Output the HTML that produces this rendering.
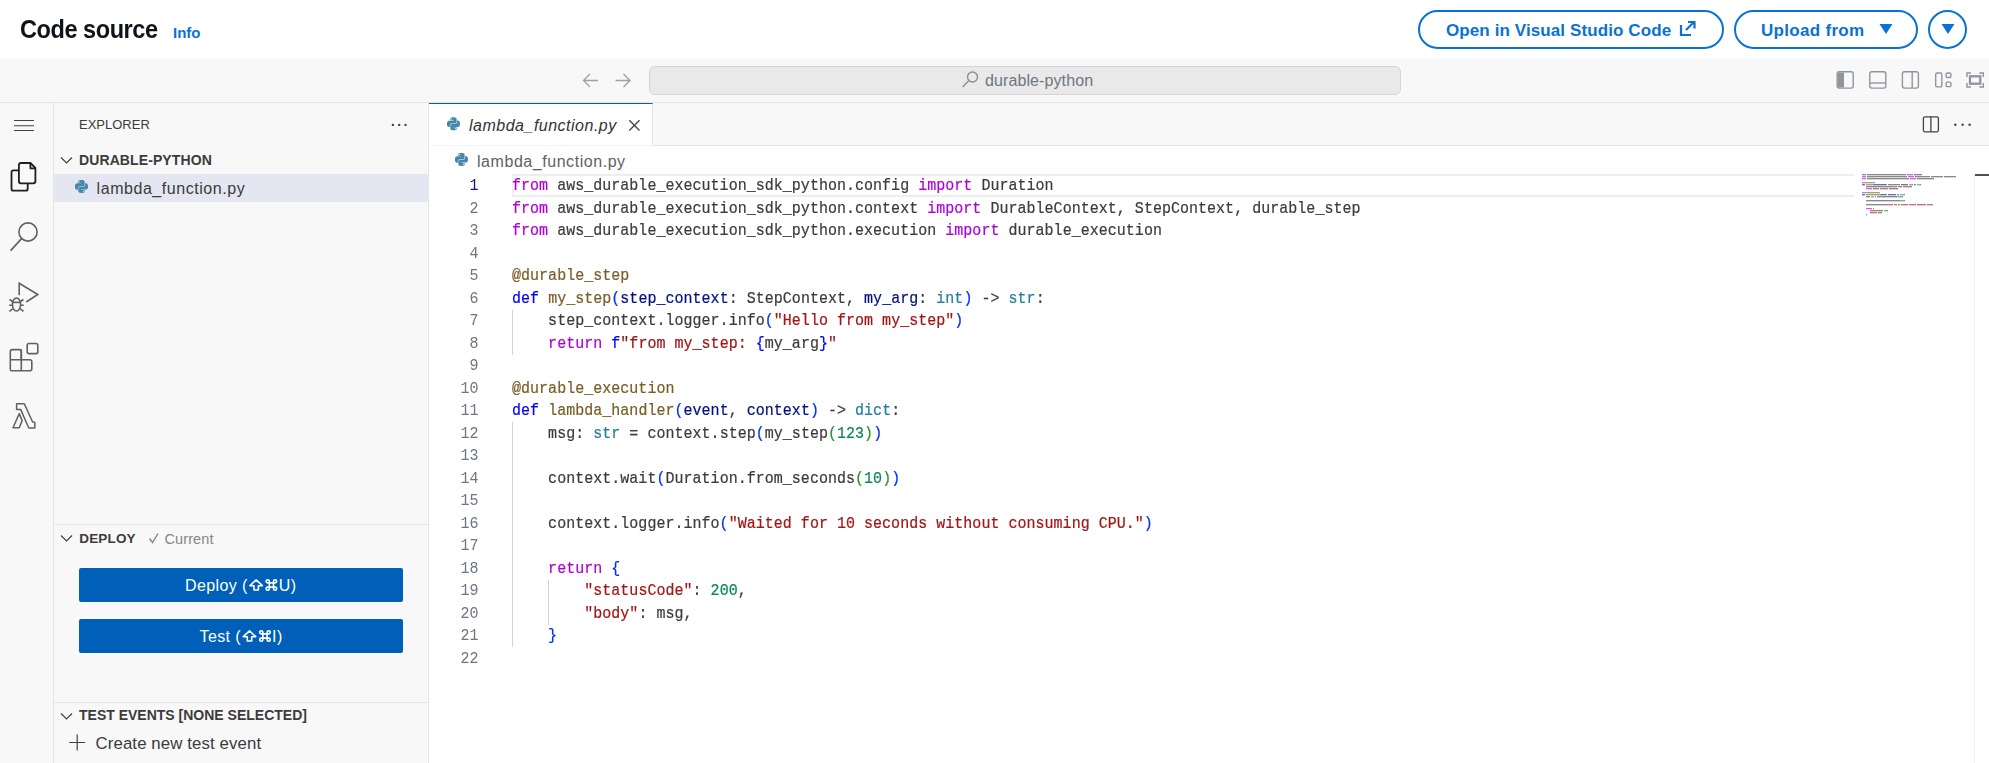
<!DOCTYPE html>
<html><head><meta charset="utf-8">
<style>
*{margin:0;padding:0;box-sizing:border-box}
html,body{width:1989px;height:763px;overflow:hidden;background:#fff;font-family:"Liberation Sans",sans-serif}
.a{position:absolute;white-space:pre}
.bg{position:absolute}
.cl{position:absolute;left:512px;height:22.5px;line-height:22.5px;font-family:"Liberation Mono",monospace;font-size:15px;white-space:pre;color:#3b3b3b;letter-spacing:0.025px;-webkit-text-stroke:0.2px currentColor;transform:scaleY(1.1);transform-origin:0 15.25px}
.ln{position:absolute;left:430px;width:48.5px;text-align:right;height:22.5px;line-height:22.5px;font-family:"Liberation Mono",monospace;font-size:15px;white-space:pre;transform:scaleY(1.1);transform-origin:0 15.25px}
#mm i{position:absolute;height:2px;opacity:.6;-webkit-mask-image:linear-gradient(180deg,#000 0 1px,rgba(0,0,0,.35) 1px 2px)}
.btn{position:absolute;border:2px solid #0972d3;border-radius:20px;background:#fff}
.dbtn{position:absolute;left:79px;width:324px;height:34px;background:#005fb8;border-radius:2px}
</style></head><body>
<!-- header -->
<div class="a" style="left:19.5px;top:14.3px;font-size:26px;line-height:30px;font-weight:bold;color:#0f141a;letter-spacing:-0.5px;transform:scaleX(0.905);transform-origin:0 0">Code source</div>
<div class="a" style="left:173px;top:24px;font-size:15px;line-height:17px;font-weight:bold;color:#0972d3">Info</div>

<div class="btn" style="left:1418px;top:10px;width:306px;height:39px"></div>
<div class="a" style="left:1446px;top:21px;font-size:17px;line-height:19px;font-weight:bold;color:#0972d3;letter-spacing:0.1px">Open in Visual Studio Code</div>
<div class="btn" style="left:1734px;top:10px;width:184px;height:39px"></div>
<div class="a" style="left:1761px;top:21px;font-size:17px;line-height:19px;font-weight:bold;color:#0972d3;letter-spacing:0.3px">Upload from</div>
<div class="btn" style="left:1928px;top:10px;width:39px;height:39px;border-radius:50%"></div>

<!-- toolbar -->
<div class="bg" style="left:0;top:59px;width:1989px;height:44px;background:#f8f8f8;border-bottom:1px solid #e5e5e5"></div>
<div class="bg" style="left:649px;top:66px;width:752px;height:29px;background:#e9e9e9;border:1px solid #d4d4d4;border-radius:6px"></div>
<div class="a" style="left:985px;top:72px;font-size:16px;line-height:18px;color:#6e7681;letter-spacing:0.1px">durable-python</div>

<!-- activity bar -->
<div class="bg" style="left:0;top:103px;width:54px;height:660px;background:#f8f8f8;border-right:1px solid #e5e5e5"></div>
<!-- sidebar -->
<div class="bg" style="left:54px;top:103px;width:375px;height:660px;background:#f8f8f8;border-right:1px solid #e5e5e5"></div>
<div class="a" style="left:79px;top:117px;font-size:13px;line-height:15px;color:#3b3b3b">EXPLORER</div>
<div class="a" style="left:79px;top:152px;font-size:14px;line-height:16px;font-weight:bold;color:#3b3b3b;letter-spacing:0.1px">DURABLE-PYTHON</div>
<div class="bg" style="left:54px;top:174px;width:374px;height:28px;background:#e4e6f1"></div>
<div class="a" style="left:96.6px;top:179.5px;font-size:16px;line-height:18px;color:#3b3b3b;letter-spacing:0.55px">lambda_function.py</div>

<div class="bg" style="left:54px;top:524px;width:374px;height:1px;background:#e5e5e5"></div>
<div class="a" style="left:79.3px;top:530.8px;font-size:13.5px;line-height:16px;font-weight:bold;color:#3b3b3b;letter-spacing:0.15px">DEPLOY</div>
<div class="a" style="left:164.5px;top:530.6px;font-size:14.5px;line-height:16px;color:#868686;letter-spacing:0.1px">Current</div>
<div class="dbtn" style="top:568px"></div>
<div class="dbtn" style="top:619px"></div>
<div class="a" style="left:185px;top:576.8px;font-size:16px;line-height:18px;color:#fff;letter-spacing:0.4px">Deploy (</div>
<div class="a" style="left:278.8px;top:576.8px;font-size:16px;line-height:18px;color:#fff;letter-spacing:0.4px">U)</div>
<div class="a" style="left:199.5px;top:627.8px;font-size:16px;line-height:18px;color:#fff;letter-spacing:0.4px">Test (</div>
<div class="a" style="left:272px;top:627.8px;font-size:16px;line-height:18px;color:#fff;letter-spacing:0.6px">I)</div>

<div class="bg" style="left:54px;top:702px;width:374px;height:1px;background:#e5e5e5"></div>
<div class="a" style="left:79px;top:707px;font-size:14px;line-height:16px;font-weight:bold;color:#3b3b3b">TEST EVENTS [NONE SELECTED]</div>
<div class="a" style="left:95.5px;top:735px;font-size:16.8px;line-height:18px;color:#3b3b3b;letter-spacing:0.12px">Create new test event</div>

<!-- editor tabs -->
<div class="bg" style="left:429px;top:103px;width:1560px;height:43px;background:#f8f8f8;border-bottom:1px solid #e5e5e5"></div>
<div class="bg" style="left:429px;top:103px;width:224px;height:43px;background:#fff;border-top:1.5px solid #005fb8;border-right:1px solid #e5e5e5;border-bottom:1px solid #f4f4f4"></div>
<div class="a" style="left:469px;top:117px;font-size:16px;line-height:18px;font-style:italic;color:#333;letter-spacing:0.5px">lambda_function.py</div>
<div class="a" style="left:477px;top:153px;font-size:16px;line-height:18px;color:#616161;letter-spacing:0.55px">lambda_function.py</div>

<!-- current line highlight -->
<div class="bg" style="left:512px;top:174px;width:1342px;height:23px;border:2px solid #eeeeee;border-right:none"></div>
<!-- indent guides -->
<div class="bg" style="left:512px;top:309.75px;width:1px;height:45px;background:#d3d3d3"></div>
<div class="bg" style="left:512px;top:422.25px;width:1px;height:225px;background:#d3d3d3"></div>
<div class="bg" style="left:548px;top:579.75px;width:1px;height:45px;background:#d3d3d3"></div>

<div class="cl" style="top:176.00px"><span style="color:#af00db">from</span><span style="color:#3b3b3b"> aws_durable_execution_sdk_python.config </span><span style="color:#af00db">import</span><span style="color:#3b3b3b"> Duration</span></div>
<div class="ln" style="top:176.00px;color:#171184">1</div>
<div class="cl" style="top:198.50px"><span style="color:#af00db">from</span><span style="color:#3b3b3b"> aws_durable_execution_sdk_python.context </span><span style="color:#af00db">import</span><span style="color:#3b3b3b"> DurableContext, StepContext, durable_step</span></div>
<div class="ln" style="top:198.50px;color:#6e7681">2</div>
<div class="cl" style="top:221.00px"><span style="color:#af00db">from</span><span style="color:#3b3b3b"> aws_durable_execution_sdk_python.execution </span><span style="color:#af00db">import</span><span style="color:#3b3b3b"> durable_execution</span></div>
<div class="ln" style="top:221.00px;color:#6e7681">3</div>
<div class="cl" style="top:243.50px"></div>
<div class="ln" style="top:243.50px;color:#6e7681">4</div>
<div class="cl" style="top:266.00px"><span style="color:#795e26">@durable_step</span></div>
<div class="ln" style="top:266.00px;color:#6e7681">5</div>
<div class="cl" style="top:288.50px"><span style="color:#0000ff">def</span><span style="color:#3b3b3b"> </span><span style="color:#795e26">my_step</span><span style="color:#0431fa">(</span><span style="color:#001080">step_context</span><span style="color:#3b3b3b">: StepContext, </span><span style="color:#001080">my_arg</span><span style="color:#3b3b3b">: </span><span style="color:#267f99">int</span><span style="color:#0431fa">)</span><span style="color:#3b3b3b"> -&gt; </span><span style="color:#267f99">str</span><span style="color:#3b3b3b">:</span></div>
<div class="ln" style="top:288.50px;color:#6e7681">6</div>
<div class="cl" style="top:311.00px"><span style="color:#3b3b3b">    step_context.logger.info</span><span style="color:#0431fa">(</span><span style="color:#a31515">&quot;Hello from my_step&quot;</span><span style="color:#0431fa">)</span></div>
<div class="ln" style="top:311.00px;color:#6e7681">7</div>
<div class="cl" style="top:333.50px"><span style="color:#3b3b3b">    </span><span style="color:#af00db">return</span><span style="color:#3b3b3b"> </span><span style="color:#0000ff">f</span><span style="color:#a31515">&quot;from my_step: </span><span style="color:#0000ff">{</span><span style="color:#3b3b3b">my_arg</span><span style="color:#0000ff">}</span><span style="color:#a31515">&quot;</span></div>
<div class="ln" style="top:333.50px;color:#6e7681">8</div>
<div class="cl" style="top:356.00px"></div>
<div class="ln" style="top:356.00px;color:#6e7681">9</div>
<div class="cl" style="top:378.50px"><span style="color:#795e26">@durable_execution</span></div>
<div class="ln" style="top:378.50px;color:#6e7681">10</div>
<div class="cl" style="top:401.00px"><span style="color:#0000ff">def</span><span style="color:#3b3b3b"> </span><span style="color:#795e26">lambda_handler</span><span style="color:#0431fa">(</span><span style="color:#001080">event</span><span style="color:#3b3b3b">, </span><span style="color:#001080">context</span><span style="color:#0431fa">)</span><span style="color:#3b3b3b"> -&gt; </span><span style="color:#267f99">dict</span><span style="color:#3b3b3b">:</span></div>
<div class="ln" style="top:401.00px;color:#6e7681">11</div>
<div class="cl" style="top:423.50px"><span style="color:#3b3b3b">    msg: </span><span style="color:#267f99">str</span><span style="color:#3b3b3b"> = context.step</span><span style="color:#0431fa">(</span><span style="color:#3b3b3b">my_step</span><span style="color:#319331">(</span><span style="color:#098658">123</span><span style="color:#319331">)</span><span style="color:#0431fa">)</span></div>
<div class="ln" style="top:423.50px;color:#6e7681">12</div>
<div class="cl" style="top:446.00px"></div>
<div class="ln" style="top:446.00px;color:#6e7681">13</div>
<div class="cl" style="top:468.50px"><span style="color:#3b3b3b">    context.wait</span><span style="color:#0431fa">(</span><span style="color:#3b3b3b">Duration.from_seconds</span><span style="color:#319331">(</span><span style="color:#098658">10</span><span style="color:#319331">)</span><span style="color:#0431fa">)</span></div>
<div class="ln" style="top:468.50px;color:#6e7681">14</div>
<div class="cl" style="top:491.00px"></div>
<div class="ln" style="top:491.00px;color:#6e7681">15</div>
<div class="cl" style="top:513.50px"><span style="color:#3b3b3b">    context.logger.info</span><span style="color:#0431fa">(</span><span style="color:#a31515">&quot;Waited for 10 seconds without consuming CPU.&quot;</span><span style="color:#0431fa">)</span></div>
<div class="ln" style="top:513.50px;color:#6e7681">16</div>
<div class="cl" style="top:536.00px"></div>
<div class="ln" style="top:536.00px;color:#6e7681">17</div>
<div class="cl" style="top:558.50px"><span style="color:#3b3b3b">    </span><span style="color:#af00db">return</span><span style="color:#3b3b3b"> </span><span style="color:#0431fa">{</span></div>
<div class="ln" style="top:558.50px;color:#6e7681">18</div>
<div class="cl" style="top:581.00px"><span style="color:#3b3b3b">        </span><span style="color:#a31515">&quot;statusCode&quot;</span><span style="color:#3b3b3b">: </span><span style="color:#098658">200</span><span style="color:#3b3b3b">,</span></div>
<div class="ln" style="top:581.00px;color:#6e7681">19</div>
<div class="cl" style="top:603.50px"><span style="color:#3b3b3b">        </span><span style="color:#a31515">&quot;body&quot;</span><span style="color:#3b3b3b">: msg,</span></div>
<div class="ln" style="top:603.50px;color:#6e7681">20</div>
<div class="cl" style="top:626.00px"><span style="color:#3b3b3b">    </span><span style="color:#0431fa">}</span></div>
<div class="ln" style="top:626.00px;color:#6e7681">21</div>
<div class="cl" style="top:648.50px"></div>
<div class="ln" style="top:648.50px;color:#6e7681">22</div>

<div id="mm"><i style="left:1862px;top:174.0px;width:4px;background:#af00db"></i><i style="left:1867px;top:174.0px;width:39px;background:#3b3b3b"></i><i style="left:1907px;top:174.0px;width:6px;background:#af00db"></i><i style="left:1914px;top:174.0px;width:8px;background:#3b3b3b"></i><i style="left:1862px;top:176.0px;width:4px;background:#af00db"></i><i style="left:1867px;top:176.0px;width:40px;background:#3b3b3b"></i><i style="left:1908px;top:176.0px;width:6px;background:#af00db"></i><i style="left:1915px;top:176.0px;width:15px;background:#3b3b3b"></i><i style="left:1931px;top:176.0px;width:12px;background:#3b3b3b"></i><i style="left:1944px;top:176.0px;width:12px;background:#3b3b3b"></i><i style="left:1862px;top:178.0px;width:4px;background:#af00db"></i><i style="left:1867px;top:178.0px;width:42px;background:#3b3b3b"></i><i style="left:1910px;top:178.0px;width:6px;background:#af00db"></i><i style="left:1917px;top:178.0px;width:17px;background:#3b3b3b"></i><i style="left:1862px;top:182.0px;width:13px;background:#795e26"></i><i style="left:1862px;top:184.0px;width:3px;background:#0000ff"></i><i style="left:1866px;top:184.0px;width:7px;background:#795e26"></i><i style="left:1873px;top:184.0px;width:1px;background:#0431fa"></i><i style="left:1874px;top:184.0px;width:12px;background:#001080"></i><i style="left:1886px;top:184.0px;width:1px;background:#3b3b3b"></i><i style="left:1888px;top:184.0px;width:12px;background:#3b3b3b"></i><i style="left:1901px;top:184.0px;width:6px;background:#001080"></i><i style="left:1907px;top:184.0px;width:1px;background:#3b3b3b"></i><i style="left:1909px;top:184.0px;width:3px;background:#267f99"></i><i style="left:1912px;top:184.0px;width:1px;background:#0431fa"></i><i style="left:1914px;top:184.0px;width:2px;background:#3b3b3b"></i><i style="left:1917px;top:184.0px;width:3px;background:#267f99"></i><i style="left:1920px;top:184.0px;width:1px;background:#3b3b3b"></i><i style="left:1866px;top:186.0px;width:24px;background:#3b3b3b"></i><i style="left:1890px;top:186.0px;width:1px;background:#0431fa"></i><i style="left:1891px;top:186.0px;width:6px;background:#a31515"></i><i style="left:1898px;top:186.0px;width:4px;background:#a31515"></i><i style="left:1903px;top:186.0px;width:8px;background:#a31515"></i><i style="left:1911px;top:186.0px;width:1px;background:#0431fa"></i><i style="left:1866px;top:188.0px;width:6px;background:#af00db"></i><i style="left:1873px;top:188.0px;width:1px;background:#0000ff"></i><i style="left:1874px;top:188.0px;width:5px;background:#a31515"></i><i style="left:1880px;top:188.0px;width:8px;background:#a31515"></i><i style="left:1889px;top:188.0px;width:1px;background:#0000ff"></i><i style="left:1890px;top:188.0px;width:6px;background:#3b3b3b"></i><i style="left:1896px;top:188.0px;width:1px;background:#0000ff"></i><i style="left:1897px;top:188.0px;width:1px;background:#a31515"></i><i style="left:1862px;top:192.0px;width:18px;background:#795e26"></i><i style="left:1862px;top:194.0px;width:3px;background:#0000ff"></i><i style="left:1866px;top:194.0px;width:14px;background:#795e26"></i><i style="left:1880px;top:194.0px;width:1px;background:#0431fa"></i><i style="left:1881px;top:194.0px;width:5px;background:#001080"></i><i style="left:1886px;top:194.0px;width:1px;background:#3b3b3b"></i><i style="left:1888px;top:194.0px;width:7px;background:#001080"></i><i style="left:1895px;top:194.0px;width:1px;background:#0431fa"></i><i style="left:1897px;top:194.0px;width:2px;background:#3b3b3b"></i><i style="left:1900px;top:194.0px;width:4px;background:#267f99"></i><i style="left:1904px;top:194.0px;width:1px;background:#3b3b3b"></i><i style="left:1866px;top:196.0px;width:4px;background:#3b3b3b"></i><i style="left:1871px;top:196.0px;width:3px;background:#267f99"></i><i style="left:1875px;top:196.0px;width:1px;background:#3b3b3b"></i><i style="left:1877px;top:196.0px;width:12px;background:#3b3b3b"></i><i style="left:1889px;top:196.0px;width:1px;background:#0431fa"></i><i style="left:1890px;top:196.0px;width:7px;background:#3b3b3b"></i><i style="left:1897px;top:196.0px;width:1px;background:#319331"></i><i style="left:1898px;top:196.0px;width:3px;background:#098658"></i><i style="left:1901px;top:196.0px;width:1px;background:#319331"></i><i style="left:1902px;top:196.0px;width:1px;background:#0431fa"></i><i style="left:1866px;top:200.0px;width:12px;background:#3b3b3b"></i><i style="left:1878px;top:200.0px;width:1px;background:#0431fa"></i><i style="left:1879px;top:200.0px;width:21px;background:#3b3b3b"></i><i style="left:1900px;top:200.0px;width:1px;background:#319331"></i><i style="left:1901px;top:200.0px;width:2px;background:#098658"></i><i style="left:1903px;top:200.0px;width:1px;background:#319331"></i><i style="left:1904px;top:200.0px;width:1px;background:#0431fa"></i><i style="left:1866px;top:204.0px;width:19px;background:#3b3b3b"></i><i style="left:1885px;top:204.0px;width:1px;background:#0431fa"></i><i style="left:1886px;top:204.0px;width:7px;background:#a31515"></i><i style="left:1894px;top:204.0px;width:3px;background:#a31515"></i><i style="left:1898px;top:204.0px;width:2px;background:#a31515"></i><i style="left:1901px;top:204.0px;width:7px;background:#a31515"></i><i style="left:1909px;top:204.0px;width:7px;background:#a31515"></i><i style="left:1917px;top:204.0px;width:9px;background:#a31515"></i><i style="left:1927px;top:204.0px;width:5px;background:#a31515"></i><i style="left:1932px;top:204.0px;width:1px;background:#0431fa"></i><i style="left:1866px;top:208.0px;width:6px;background:#af00db"></i><i style="left:1873px;top:208.0px;width:1px;background:#0431fa"></i><i style="left:1870px;top:210.0px;width:12px;background:#a31515"></i><i style="left:1882px;top:210.0px;width:1px;background:#3b3b3b"></i><i style="left:1884px;top:210.0px;width:3px;background:#098658"></i><i style="left:1887px;top:210.0px;width:1px;background:#3b3b3b"></i><i style="left:1870px;top:212.0px;width:6px;background:#a31515"></i><i style="left:1876px;top:212.0px;width:1px;background:#3b3b3b"></i><i style="left:1878px;top:212.0px;width:4px;background:#3b3b3b"></i><i style="left:1866px;top:214.0px;width:1px;background:#0431fa"></i></div>
<!-- scrollbar -->
<div class="bg" style="left:1974px;top:174px;width:1px;height:589px;background:#f0f0f0"></div>
<div class="bg" style="left:1975px;top:174px;width:14px;height:2px;background:#505050"></div>

<svg class="bg" style="left:0;top:0" width="1989" height="763" viewBox="0 0 1989 763" fill="none">
 <!-- header triangles / external icon -->
 <g fill="#0972d3">
  <path d="M1879.5,24 L1892.5,24 L1886,34 Z"/>
  <path d="M1941.5,24 L1954.5,24 L1948,34 Z"/>
 </g>
 <g stroke="#0972d3" stroke-width="2.2" fill="none">
  <path d="M1681,25 V35 H1691"/>
  <path d="M1686,30 L1694,22 M1688,22 H1694.5 V28.5"/>
 </g>
 <!-- nav arrows -->
 <g stroke="#a0a0a0" stroke-width="1.3" fill="none">
  <path d="M598,80.5 H583.5 M590,74 L583.5,80.5 L590,87"/>
  <path d="M615.5,80.5 H630 M623.5,74 L630,80.5 L623.5,87"/>
 </g>
 <!-- search icon -->
 <g stroke="#8a8f96" stroke-width="1.4" fill="none">
  <circle cx="972.5" cy="77" r="5"/>
  <path d="M969,80.5 L962.5,87"/>
 </g>
 <!-- layout icons -->
 <g stroke="#8e959e" stroke-width="1.4" fill="none">
  <rect x="1837.2" y="71.8" width="16" height="16.3" rx="2"/>
  <rect x="1869.8" y="71.8" width="16" height="16.3" rx="2"/>
  <path d="M1869.8,83 H1885.8"/>
  <rect x="1902.4" y="71.8" width="16" height="16.3" rx="2"/>
  <path d="M1912.2,71.8 V88.1"/>
  <rect x="1935.7" y="73" width="6.1" height="13.9" rx="1.5"/>
  <rect x="1946.1" y="73" width="4.8" height="4.5" rx="1.2"/>
  <rect x="1946.1" y="82.1" width="4.8" height="4.5" rx="1.2"/>
  <path d="M1967,77 V73 H1971 M1979.3,73 H1983.3 V77 M1983.3,83 V87 H1979.3 M1971,87 H1967 V83"/>
  <rect x="1970" y="76.3" width="10.3" height="7.4" stroke-width="2.3"/>
 </g>
 <path d="M1838,72.5 H1844 V87.5 H1838 Z" fill="#8e959e"/>

 <!-- activity bar -->
 <g stroke="#424242" stroke-width="1.2">
  <path d="M14,120.5 H34 M14,125.75 H34 M14,130.5 H34"/>
 </g>
 <g stroke="#1f1f1f" stroke-width="1.8" fill="none" stroke-linejoin="round">
  <path d="M18.9,170.4 H13.5 Q11.5,170.4 11.5,172.4 V188.7 Q11.5,190.7 13.5,190.7 H25.7 Q27.7,190.7 27.7,188.7 V183.3"/>
  <path d="M30.4,163 H20.9 Q18.9,163 18.9,165 V181.3 Q18.9,183.3 20.9,183.3 H33.4 Q35.4,183.3 35.4,181.3 V168 Z"/>
  <path d="M30.4,163 V168.3 H35.4"/>
 </g>
 <g stroke="#616161" stroke-width="1.6" fill="none">
  <circle cx="28" cy="232" r="9.1"/>
  <path d="M21.6,238.6 L10.6,250.6"/>
  <path d="M19.2,295.3 V283.2 L37.8,294.5 L26.2,302"/>
  <ellipse cx="16.5" cy="304.5" rx="4.1" ry="6.5"/>
  <path d="M12.4,302.4 H20.6"/>
  <path d="M9.5,299.5 L12.6,301.5 M23.5,299.5 L20.4,301.5 M9.2,305.3 H12.4 M23.8,305.3 H20.6 M9.5,311.3 L12.6,308.8 M23.5,311.3 L20.4,308.8"/>
  <path d="M10.3,359.7 H21.3 M21.3,349.6 V370.8"/>
  <path d="M11.6,349.6 H19.3 Q21.3,349.6 21.3,351.6 V359.7 H29.8 Q31.8,359.7 31.8,361.7 V368.8 Q31.8,370.8 29.8,370.8 H11.6 Q10.3,370.8 10.3,369.5 V351.6 Q10.3,349.6 12.3,349.6"/>
  <rect x="27.2" y="343.5" width="10.6" height="10.1" rx="1.8"/>
 </g>
 <g stroke="#616161" stroke-width="1.5" fill="none" stroke-linejoin="round">
  <path d="M16.6,403.8 H24.3 L32.5,421.8 L34.8,422.5 V428 H28.8 L20.6,409.4 H16.6 Z"/>
  <path d="M19.3,413.6 L22.1,420.6 L19.3,427.7 H13 Z"/>
 </g>

 <!-- explorer dots -->
 <g fill="#424242">
  <circle cx="392.9" cy="124.9" r="1.2"/><circle cx="399.2" cy="124.9" r="1.2"/><circle cx="405.5" cy="124.9" r="1.2"/>
  <circle cx="1955.3" cy="124.8" r="1.2"/><circle cx="1962.6" cy="124.8" r="1.2"/><circle cx="1969.6" cy="124.8" r="1.2"/>
 </g>
 <!-- chevrons -->
 <g stroke="#424242" stroke-width="1.2" fill="none">
  <path d="M61,157.5 L66.5,163 L72,157.5"/>
  <path d="M61,535.5 L66.5,541 L72,535.5"/>
  <path d="M61,713.5 L66.5,719 L72,713.5"/>
  <path d="M77.2,734.5 V750.5 M69.2,742.5 H85.2"/>
 </g>
 <!-- check -->
 <path d="M149.5,538.5 L152.5,542.5 L158,533.5" stroke="#868686" stroke-width="1.4" fill="none"/>
 <!-- shift/cmd glyphs -->
 <g stroke="#fff" stroke-width="1.6" fill="none" stroke-linejoin="round">
  <path d="M256.2,579.8 L250.0,585.7 H254.0 V590.0 H258.4 V585.7 H262.4 Z"/>
  <path d="M249.5,630.8 L243.3,636.7 H247.3 V641.0 H251.7 V636.7 H255.7 Z"/>
 </g>
 <g stroke="#fff" stroke-width="1.6" fill="none">
  <path d="M269.29999999999995,582.9 H273.5 V587.1 H269.29999999999995 Z M269.29999999999995,582.9 V581.3 A1.6,1.6 0 1 0 267.7,582.9 H269.29999999999995 M273.5,582.9 V581.3 A1.6,1.6 0 1 1 275.09999999999997,582.9 H273.5 M269.29999999999995,587.1 V588.7 A1.6,1.6 0 1 1 267.7,587.1 H269.29999999999995 M273.5,587.1 V588.7 A1.6,1.6 0 1 0 275.09999999999997,587.1 H273.5"/>
  <path d="M262.9,633.9 H267.1 V638.1 H262.9 Z M262.9,633.9 V632.3 A1.6,1.6 0 1 0 261.3,633.9 H262.9 M267.1,633.9 V632.3 A1.6,1.6 0 1 1 268.7,633.9 H267.1 M262.9,638.1 V639.7 A1.6,1.6 0 1 1 261.3,638.1 H262.9 M267.1,638.1 V639.7 A1.6,1.6 0 1 0 268.7,638.1 H267.1"/>
 </g>
 <!-- tab close -->
 <path d="M629.3,120.3 L639.5,130.5 M639.5,120.3 L629.3,130.5" stroke="#424242" stroke-width="1.3"/>
 <!-- split editor -->
 <g stroke="#424242" stroke-width="1.3" fill="none">
  <rect x="1923.4" y="116.8" width="15" height="15" rx="1.5"/>
  <path d="M1930.9,116.8 V131.8"/>
 </g>
 <!-- python icons -->
 <defs>
  <path id="py" d="M14.25.18l.9.2.73.26.59.3.45.32.34.34.25.34.16.33.1.3.04.26.02.2-.01.13V8.5l-.05.63-.13.55-.21.46-.26.38-.3.31-.33.25-.35.19-.35.14-.33.1-.3.07-.26.04-.21.02H8.77l-.69.05-.59.14-.5.22-.41.27-.33.32-.27.35-.2.36-.15.37-.1.35-.07.32-.04.27-.02.21v3.06H3.17l-.21-.03-.28-.07-.32-.12-.35-.18-.36-.26-.36-.36-.35-.46-.32-.59-.28-.73-.21-.88-.14-1.050-.05-1.23.06-1.22.16-1.04.24-.87.32-.71.36-.57.4-.44.42-.33.42-.24.4-.16.36-.1.32-.05.24-.01h.16l.06.01h8.16v-.83H6.18l-.01-2.750-.02-.37.05-.34.11-.31.17-.28.25-.26.31-.23.38-.2.44-.18.51-.15.58-.12.64-.1.71-.06.77-.04.84-.02 1.27.05zm-6.3 1.98l-.23.33-.08.41.08.41.23.34.33.22.41.09.41-.09.33-.22.23-.34.08-.41-.08-.41-.23-.33-.33-.22-.41-.09-.41.09zm13.09 3.95l.28.06.32.12.35.18.36.27.36.35.35.47.32.59.28.73.21.88.14 1.04.05 1.23-.06 1.23-.16 1.04-.24.86-.32.71-.36.57-.4.45-.42.33-.42.24-.4.16-.36.09-.32.05-.24.02-.16-.01h-8.22v.82h5.84l.01 2.76.02.36-.05.34-.11.31-.17.29-.25.25-.31.24-.38.2-.44.17-.51.15-.58.13-.64.09-.71.07-.77.04-.84.01-1.27-.04-1.07-.14-.9-.2-.73-.25-.59-.3-.45-.33-.34-.34-.25-.34-.16-.33-.1-.3-.04-.25-.02-.2.01-.13v-5.34l.05-.64.13-.54.21-.46.26-.38.3-.32.33-.24.35-.2.35-.14.33-.1.3-.06.26-.04.21-.02.13-.01h5.84l.69-.05.59-.14.5-.21.41-.28.33-.32.27-.35.2-.36.15-.36.1-.35.07-.32.04-.28.02-.21V6.07h2.09l.14.01zm-6.47 14.25l-.23.33-.08.41.08.41.23.33.33.23.41.08.41-.08.33-.23.23-.33.08-.41-.08-.41-.23-.33-.33-.23-.41-.08-.41.08z"/>
 </defs>
 <g fill="#4587ab">
  <use href="#py" transform="translate(75,180) scale(0.54)"/>
  <use href="#py" transform="translate(447,117.3) scale(0.54)"/>
  <use href="#py" transform="translate(455,153) scale(0.54)"/>
 </g>
</svg>
</body></html>
